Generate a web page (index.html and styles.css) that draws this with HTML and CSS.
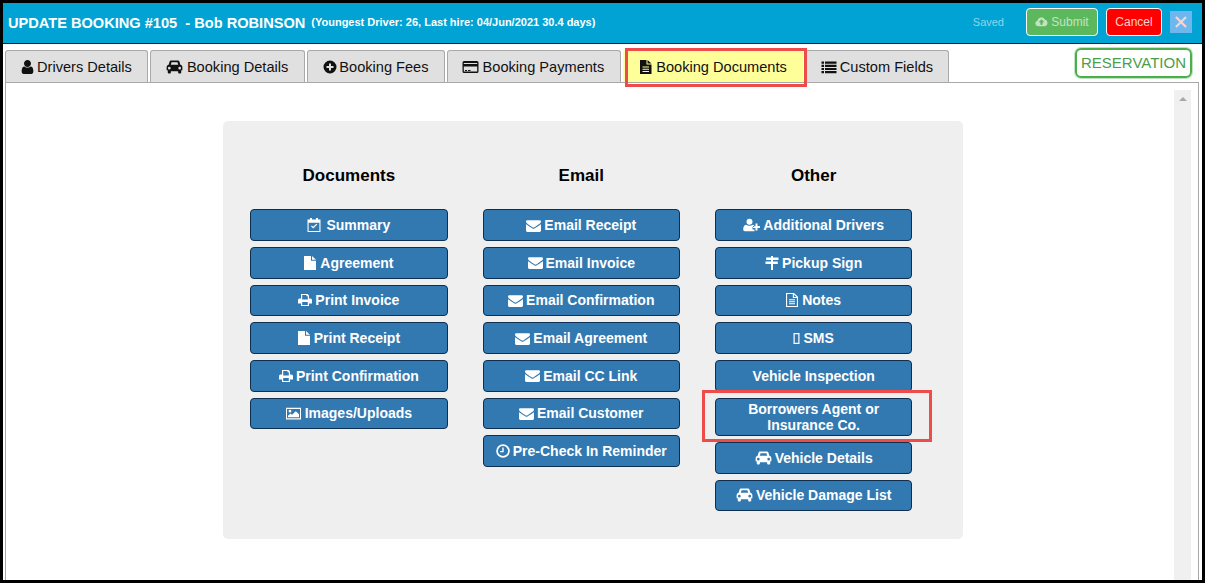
FILE: index.html
```html
<!DOCTYPE html>
<html lang="en">
<head>
<meta charset="utf-8">
<title>Update Booking</title>
<link rel="stylesheet" href="styles.css">
</head>
<body>
<svg class="sprite" xmlns="http://www.w3.org/2000/svg">
  <symbol id="i-user" viewBox="256 128 1280 1536"><path d="M1536 1399q0 109-62.500 187t-150.500 78h-854q-88 0-150.500-78t-62.500-187q0-85 8.500-160.500t31.500-152 58.500-131 94-89 134.500-34.500q131 128 313 128t313-128q76 0 134.500 34.500t94 89 58.500 131 31.500 152 8.500 160.500zm-256-887q0 159-112.500 271.500t-271.500 112.500-271.500-112.500-112.500-271.500 112.500-271.500 271.500-112.500 271.500 112.500 112.500 271.500z"/></symbol>
  <symbol id="i-mail" viewBox="0 128 1792 1536"><path d="M1792 710v794q0 66-47 113t-113 47h-1472q-66 0-113-47t-47-113v-794q44 49 101 87 362 246 497 345 57 42 92.500 65.500t94.500 48 110 24.500h2q51 0 110-24.500t94.500-48 92.500-65.500q170-123 498-345 57-39 100-87zm0-294q0 79-49 151t-122 123q-376 261-468 325-10 7-42.500 30.500t-54 38-52 32.500-57.500 27-50 9h-2q-23 0-50-9t-57.500-27-52-32.500-54-38-42.500-30.500q-91-64-262-182.500t-205-142.500q-62-42-117-115.500t-55-136.500q0-78 41.500-130t118.500-52h1472q65 0 112.500 47t47.500 113z"/></symbol>
  <symbol id="i-car" viewBox="0 0 16 13.500"><path fill-rule="evenodd" d="M3.400 1.300Q3.600.5 4.500.5H11.500Q12.400.5 12.600 1.300L13.700 4.700Q15.600 5.100 15.600 6.800V10H14.500V12Q14.500 13 13.500 13H12.500Q11.500 13 11.500 12V10.800H4.500V12Q4.500 13 3.500 13H2.500Q1.500 13 1.500 12V10H.4V6.800Q.4 5.100 2.300 4.700ZM4.400 4.700H11.600L10.800 2.200H5.200ZM3 6.600A1.300 1.300 0 1 0 3 9.200A1.300 1.300 0 1 0 3 6.600ZM13 6.600A1.300 1.300 0 1 0 13 9.200A1.300 1.300 0 1 0 13 6.600Z"/></symbol>
  <symbol id="i-plus" viewBox="0 0 14 14"><path fill-rule="evenodd" d="M7 .5A6.500 6.500 0 1 0 7 13.500A6.500 6.500 0 1 0 7 .5ZM6 3.500H8V6H10.500V8H8V10.500H6V8H3.500V6H6Z"/></symbol>
  <symbol id="i-card" viewBox="0 0 16 14"><path fill-rule="evenodd" d="M1.500 1H14.500Q16 1 16 2.500V11.500Q16 13 14.500 13H1.500Q0 13 0 11.500V2.500Q0 1 1.500 1ZM1.300 3V4H14.700V3ZM1.300 6.500V11.500H14.700V6.500ZM2.500 10H4.500V11H2.500ZM5.500 10H8V11H5.500Z"/></symbol>
  <symbol id="i-filetext" viewBox="0 0 12 14"><path fill-rule="evenodd" d="M.5 0H7V4.500H12V14H.5ZM8 0L12 3.500H8ZM3 6.500V7.500H9.500V6.500ZM3 8.800V9.800H9.500V8.800ZM3 11V12H9.500V11Z"/></symbol>
  <symbol id="i-list" viewBox="0 0 16 14"><path d="M.5 1.500H3V3.700H.5ZM4 1.500H15.500V3.700H4ZM.5 4.700H3V6.900H.5ZM4 4.700H15.500V6.900H4ZM.5 7.900H3V10.100H.5ZM4 7.900H15.500V10.100H4ZM.5 11.100H3V13.300H.5ZM4 11.100H15.500V13.300H4Z"/></symbol>
  <symbol id="i-cloud" viewBox="0 0 14 11"><path fill-rule="evenodd" d="M3.200 10.500A3 3 0 0 1 2.600 4.600A4.200 4.200 0 0 1 10.500 3.300A3.700 3.700 0 0 1 10.800 10.500ZM7 3.200L3.900 6.400H5.800V9H8.200V6.400H10.100Z"/></symbol>
  <symbol id="i-cal" viewBox="0 0 14 14"><path fill-rule="evenodd" d="M3 0H5V1.500H9V0H11V1.500H13.500V14H.5V1.500H3ZM1.600 4.800V12.900H12.400V4.800ZM4 8.200L4.800 7.400L6.200 8.800L9.400 5.800L10.200 6.600L6.200 10.500Z"/></symbol>
  <symbol id="i-file" viewBox="0 0 12 14"><path d="M0 0H7V4.800H12V14H0ZM8 0L12 3.800H8Z"/></symbol>
  <symbol id="i-print" viewBox="0 0 14 13"><path fill-rule="evenodd" d="M3 .5H9.500L11 2V5H12.500Q14 5 14 6.500V10H11V12.500H3V10H0V6.500Q0 5 1.500 5H3ZM4.200 1.600V6H9.800V2.800H8.500V1.600ZM4.200 8.500V11.400H9.800V8.500Z"/></symbol>
  <symbol id="i-pic" viewBox="0 0 15 13"><path fill-rule="evenodd" d="M0 .8H15V12.400H0ZM1 1.900V11.300H14V1.900ZM2 10.300V8.800L4.500 6.500L6 7.800L9.800 4.200L13 7.300V10.300ZM4 2.800A1.400 1.400 0 1 0 4 5.600A1.400 1.400 0 1 0 4 2.800Z"/></symbol>
  <symbol id="i-clock" viewBox="0 0 14 14"><path fill-rule="evenodd" d="M7 .2A6.800 6.800 0 1 0 7 13.800A6.800 6.800 0 1 0 7 .2ZM7 1.900A5.100 5.100 0 1 1 7 12.100A5.100 5.100 0 1 1 7 1.900ZM6.300 3.500H7.700V8.300H4V6.900H6.300Z"/></symbol>
  <symbol id="i-userplus" viewBox="0 0 17 13"><path fill-rule="evenodd" d="M6.500 .3A3 3 0 1 1 6.500 6.300A3 3 0 1 1 6.500 .3ZM3 6.300Q4.500 7.300 6.500 7.300T10 6.300Q10.800 6.500 11.300 7.200V8.500H9.500V11H11.500V12.700H1.800Q.2 12.700.2 11Q.2 7 3 6.300ZM12.500 5H14.500V7.500H17V9.500H14.500V12H12.500V9.500H10V7.500H12.500Z"/></symbol>
  <symbol id="i-signs" viewBox="0 0 14 14"><path d="M6 0H8V1.500H13.500V4H8V5.500H12.800V8H8V14H6V8H.5V5.500H6V4H1.200V1.500H6Z"/></symbol>
  <symbol id="i-fileo" viewBox="0 0 12 14"><path fill-rule="evenodd" d="M0 0H8L12 3.800V14H0ZM1.100 1.100V12.900H10.900V5H6.800V1.100ZM7.900 1.600V3.900H10.400ZM3 6.300H9V7.200H3ZM3 8.300H9V9.200H3ZM3 10.300H9V11.200H3Z"/></symbol>
  <symbol id="i-mobile" viewBox="0 0 7 11"><path fill-rule="evenodd" d="M.5 0H6.500V11H.5ZM1.700 1.200V9.800H5.300V1.200Z"/></symbol>
  <symbol id="i-close" viewBox="0 0 14 14"><path d="M2 .2L7 5.200L12 .2L13.800 2L8.800 7L13.800 12L12 13.800L7 8.800L2 13.800L.2 12L5.200 7L.2 2Z"/></symbol>
</svg>

<div class="frame">
  <header class="topbar">
    <h1 class="title">UPDATE BOOKING #105&nbsp; - Bob ROBINSON</h1>
    <span class="subtitle">(Youngest Driver: 26, Last hire: 04/Jun/2021 30.4 days)</span>
    <div class="actions">
      <span class="saved">Saved</span>
      <button class="act submit" type="button"><svg class="cloud"><use href="#i-cloud"/></svg>Submit</button>
      <button class="act cancel" type="button">Cancel</button>
      <button class="closebtn" type="button" aria-label="Close"><svg class="x"><use href="#i-close"/></svg></button>
    </div>
  </header>

  <div class="tabrow">
    <nav class="tabs">
      <a class="tab"><svg class="ti t-user"><use href="#i-user"/></svg>Drivers Details</a>
      <a class="tab tab-wide"><svg class="ti t-car"><use href="#i-car"/></svg>Booking Details</a>
      <a class="tab"><svg class="ti t-plus"><use href="#i-plus"/></svg>Booking Fees</a>
      <a class="tab tab-wide"><svg class="ti t-card"><use href="#i-card"/></svg>Booking Payments</a>
      <a class="tab active"><svg class="ti t-doc"><use href="#i-filetext"/></svg>Booking Documents</a>
      <a class="tab"><svg class="ti t-list"><use href="#i-list"/></svg>Custom Fields</a>
    </nav>
    <div class="status">RESERVATION</div>
  </div>

  <main class="content">
    <section class="panel">
      <div class="col">
        <h2>Documents</h2>
        <a class="btn"><svg class="bi"><use href="#i-cal"/></svg>Summary</a>
        <a class="btn"><svg class="bi n12"><use href="#i-file"/></svg>Agreement</a>
        <a class="btn"><svg class="bi n-tight"><use href="#i-print"/></svg>Print Invoice</a>
        <a class="btn"><svg class="bi n12"><use href="#i-file"/></svg>Print Receipt</a>
        <a class="btn"><svg class="bi n-tight"><use href="#i-print"/></svg>Print Confirmation</a>
        <a class="btn"><svg class="bi n15 n-pic"><use href="#i-pic"/></svg>Images/Uploads</a>
      </div>
      <div class="col">
        <h2>Email</h2>
        <a class="btn"><svg class="bi n15"><use href="#i-mail"/></svg>Email Receipt</a>
        <a class="btn"><svg class="bi n15"><use href="#i-mail"/></svg>Email Invoice</a>
        <a class="btn"><svg class="bi n15"><use href="#i-mail"/></svg>Email Confirmation</a>
        <a class="btn"><svg class="bi n15"><use href="#i-mail"/></svg>Email Agreement</a>
        <a class="btn"><svg class="bi n15"><use href="#i-mail"/></svg>Email CC Link</a>
        <a class="btn"><svg class="bi n15"><use href="#i-mail"/></svg>Email Customer</a>
        <a class="btn"><svg class="bi n-tight"><use href="#i-clock"/></svg>Pre-Check In Reminder</a>
      </div>
      <div class="col">
        <h2>Other</h2>
        <a class="btn"><svg class="bi n17"><use href="#i-userplus"/></svg>Additional Drivers</a>
        <a class="btn"><svg class="bi n-tight"><use href="#i-signs"/></svg>Pickup Sign</a>
        <a class="btn"><svg class="bi n12"><use href="#i-fileo"/></svg>Notes</a>
        <a class="btn"><svg class="bi n7"><use href="#i-mobile"/></svg>SMS</a>
        <a class="btn">Vehicle Inspection</a>
        <a class="btn tall">Borrowers Agent or<br>Insurance Co.</a>
        <a class="btn"><svg class="bi n17"><use href="#i-car"/></svg>Vehicle Details</a>
        <a class="btn"><svg class="bi n17"><use href="#i-car"/></svg>Vehicle Damage List</a>
      </div>
    </section>
    <div class="scrollbar"><span class="arrow"></span></div>
  </main>

  <div class="callout callout-tab"></div>
  <div class="callout callout-btn"></div>
</div>
</body>
</html>
```

FILE: styles.css
```css
* { box-sizing: border-box; }
html, body { margin: 0; padding: 0; height: 100%; overflow: hidden; background: #000; }
body { font-family: "Liberation Sans", Arial, sans-serif; }
.sprite { position: absolute; width: 0; height: 0; }
svg { fill: currentColor; }

.frame {
  position: relative;
  width: 1199px;
  height: 577px;
  margin: 3px 0 0 3px;
  background: #fff;
  display: flex;
  flex-direction: column;
}

.topbar {
  height: 41px;
  flex: none;
  display: flex;
  align-items: center;
  padding: 0 10px 0 5px;
  background: #00a3d3;
  border-bottom: 1px solid #06222c;
  color: #fff;
}
.title { margin: 0; font-size: 14.6px; font-weight: 700; white-space: nowrap; }
.subtitle { margin: -3px 0 0 6px; font-size: 11px; font-weight: 700; white-space: nowrap; }
.actions { margin-left: auto; display: flex; align-items: center; }
.saved { font-size: 11px; color: #8fd6ec; margin-right: 22px; margin-top: -2px; }
.act {
  height: 28px;
  margin-top: -2px;
  border: 1px solid #fff;
  border-radius: 4px;
  font: 12px "Liberation Sans", Arial, sans-serif;
  padding: 0;
  color: #fff;
}
.submit { width: 72px; margin-right: 8px; background: #5cb85c; color: #c4e3c4; }
.cloud { width: 13px; height: 11px; margin-right: 3px; vertical-align: -1px; }
.cancel { width: 56px; margin-right: 8px; background: #f00; color: #ffd0d0; }
.closebtn {
  width: 22px;
  height: 22px;
  margin-top: -3px;
  padding: 0;
  border: 0;
  background: #6db7ee;
  color: #f6d5d5;
  display: flex;
  align-items: center;
  justify-content: center;
}
.x { width: 12px; height: 12px; }

.tabrow { flex: none; display: flex; height: 38px; padding: 3px 10px 0 2px; }
.tabs { display: flex; gap: 2px; margin-top: 3px; }
.tab {
  height: 32px;
  padding: 0 15px;
  display: flex;
  align-items: center;
  background: #e0e0e0;
  border: 1px solid #a9a9a9;
  border-bottom: 0;
  border-radius: 3px 3px 0 0;
  color: #111;
  font-size: 14.6px;
  white-space: nowrap;
}
.tab-wide { padding-right: 16px; }
.tab.active { background: #ffff99; border-color: #ffff99; }
.ti { height: 14px; flex: none; }
.t-user { width: 13px; margin-right: 3px; }
.t-car { width: 17px; margin-right: 4px; }
.t-plus { width: 14px; margin-right: 2px; }
.t-card { width: 17px; margin: 0 4px 0 -1px; }
.t-doc { width: 13px; margin-right: 4px; }
.t-list { width: 16px; margin-right: 3px; }
.status {
  margin: 1px 0 0 auto;
  width: 117px;
  height: 30px;
  border: 2px solid #4cae4c;
  border-radius: 6px;
  box-shadow: 0 0 0 1px rgba(76, 174, 76, .35);
  color: #4a9e4a;
  font-size: 15px;
  line-height: 25px;
  text-align: center;
  white-space: nowrap;
}

.content {
  flex: 1;
  min-height: 0;
  margin: 0 3px 0 2px;
  border: 1px solid #a9a9a9;
  border-bottom: 0;
  display: flex;
  align-items: flex-start;
  overflow: hidden;
}
.panel {
  flex: none;
  width: 740px;
  height: 418px;
  margin: 38px 0 0 217px;
  padding: 0 0 0 27.2px;
  background: #efefef;
  border-radius: 5px;
  display: grid;
  grid-template-columns: repeat(3, 197.4px);
  column-gap: 35px;
}
.col h2 {
  margin: 0;
  height: 88.2px;
  padding-top: 45px;
  font-size: 17px;
  line-height: 20px;
  font-weight: 700;
  color: #000;
  text-align: center;
}
.btn {
  height: 31.7px;
  margin-bottom: 6px;
  display: flex;
  align-items: center;
  justify-content: center;
  background: #3279b1;
  border: 1px solid #0f2f50;
  border-radius: 4px;
  color: #fff;
  font-size: 14px;
  font-weight: 700;
  line-height: 16px;
  text-align: center;
}
.btn.tall { height: 38.3px; }
.bi { width: 14px; height: 14px; margin-right: 5px; flex: none; }
.n7 { width: 7px; height: 11px; margin-right: 3px; }
.n12 { width: 12px; margin-right: 4px; }
.n15 { width: 15px; height: 13px; margin-right: 3px; }
.n17 { width: 17px; margin-right: 3px; }
.n-tight { margin-right: 3px; }
.n-pic { margin-right: 4px; }

.scrollbar {
  flex: none;
  width: 17px;
  height: 500px;
  margin: 7px 0 0 211px;
  background: #f0f0f0;
  display: flex;
  justify-content: center;
  padding-top: 7px;
}
.arrow {
  width: 0;
  height: 0;
  border-left: 4px solid transparent;
  border-right: 4px solid transparent;
  border-bottom: 4px solid #a8a8a8;
}

.callout { position: absolute; border: 3px solid #ee4b4b; pointer-events: none; }
.callout-tab { left: 622px; top: 45px; width: 182px; height: 39px; }
.callout-btn { left: 699px; top: 387px; width: 230px; height: 52px; }
```
